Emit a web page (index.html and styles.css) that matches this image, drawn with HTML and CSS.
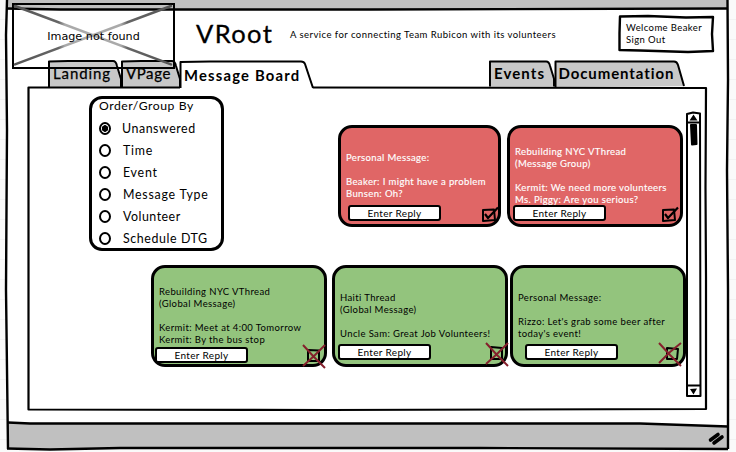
FILE: index.html
```html
<!DOCTYPE html>
<html lang="en">
<head>
<meta charset="utf-8">
<title>VRoot</title>
<link rel="stylesheet" href="styles.css">
</head>
<body>
<div class="window">
  <svg class="frame" viewBox="0 0 736 452" aria-hidden="true">
    <path class="paper" d="M7 0H728V448H7Z"/>
    <path class="chrome" d="M6 0H728V9H6Z"/>
    <path class="chrome" d="M7 423L640 423L728 427V448L7 449Z"/>
    <path class="ink" d="M7 0L6 35L7 130L6 290L8 449"/>
    <path class="ink" d="M6 8.500L60 9.500L370 9.500L728 8.500"/>
    <path class="ink" d="M727.500 0L728 80L727 170L728 290L728 449"/>
    <path class="ink" d="M8 422.500L30 423.500L300 423.500L640 423.500L728 426.500"/>
    <path class="ink" d="M7 448.500L50 449.500L120 448L480 448L728 449"/>
    <path class="ink grip" d="M710.500 440L718 434.500M714 443L722 437"/>
  </svg>

  <header class="header">
    <div class="logo">
      <svg class="logo-cross" viewBox="0 0 162 65" aria-hidden="true">
        <defs>
          <linearGradient id="fade" x1="0" x2="1" y1="0" y2="0">
            <stop offset="0" stop-color="#555"/><stop offset=".28" stop-color="#666"/>
            <stop offset=".32" stop-color="#aaa"/><stop offset=".68" stop-color="#aaa"/>
            <stop offset=".72" stop-color="#666"/><stop offset="1" stop-color="#555"/>
          </linearGradient>
        </defs>
        <path d="M3 3L158 61M3 61L158 3" stroke="url(#fade)" stroke-width="2.6" stroke-linecap="round"/>
      </svg>
      <span>Image not found</span>
    </div>
    <h1 class="title">VRoot</h1>
    <p class="tagline">A service for connecting Team Rubicon with its volunteers</p>
    <div class="account">
      <svg class="outline" viewBox="0 0 96 38" aria-hidden="true"><path d="M2 1.500L30 1L68 2.500L95 2L94 19L95 36L70 37L22 35.500L1.500 35L1.500 18Z"/></svg>
      <span>Welcome Beaker</span><span>Sign Out</span>
    </div>
  </header>

  <nav class="tabs">
    <a class="tab landing"><svg viewBox="0 0 73 27" aria-hidden="true"><path d="M1 26V.500L20 0H65Q68 0 69 5L73 18V26"/></svg><span>Landing</span></a>
    <a class="tab vpage"><svg viewBox="0 0 59 27" aria-hidden="true"><path d="M1 26V.500L20 0H51Q54 0 55 5L59 18V26"/></svg><span>VPage</span></a>
    <a class="tab board"><svg viewBox="0 0 134 27" aria-hidden="true"><path d="M.500 27V1L30 .500H121Q124 .500 125 3L133 27"/></svg><span>Message Board</span></a>
    <a class="tab events"><svg viewBox="0 0 67 27" aria-hidden="true"><path d="M1 26V.500L20 .500H58Q61 .500 62 5L66 18V26"/></svg><span>Events</span></a>
    <a class="tab docs"><svg viewBox="0 0 131 27" aria-hidden="true"><path d="M.500 26V.500L30 .500H119Q122 .500 123 4L129 25"/></svg><span>Documentation</span></a>
  </nav>

  <main class="panel">
    <svg class="panel-line" viewBox="0 0 680 324" aria-hidden="true">
      <path d="M152 .500L.500 .500L.500 322.500L300 323L678 322L678 190L677.500 100L678 1L285 .500"/>
    </svg>
    <div class="content">
      <div class="row top">
        <form class="filter">
          <h2>Order/Group By</h2>
          <label><i class="radio on"></i><span class="f1">Unanswered</span></label>
          <label><i class="radio"></i><span class="f2">Time</span></label>
          <label><i class="radio"></i><span class="f3">Event</span></label>
          <label><i class="radio"></i><span class="f4">Message Type</span></label>
          <label><i class="radio"></i><span class="f5">Volunteer</span></label>
          <label><i class="radio"></i><span class="f6">Schedule DTG</span></label>
        </form>
        <article class="card red personal">
          <p>Personal Message:<br><br>Beaker: I might have a problem<br>Bunsen: Oh?</p>
          <div class="actions"><button>Enter Reply</button>
            <svg class="mark" viewBox="0 0 24 24" aria-hidden="true"><path class="box" d="M5 8L16 7.500L17 18L5 19Z"/><path class="check" d="M7 12L10 16L20 5.500"/></svg></div>
        </article>
        <article class="card red">
          <p>Rebuilding NYC VThread<br>(Message Group)<br><br>Kermit: We need more volunteers<br>Ms. Piggy: Are you serious?</p>
          <div class="actions"><button>Enter Reply</button>
            <svg class="mark group-mark" viewBox="0 0 24 24" aria-hidden="true"><path class="box" d="M5 8L16 7.500L17 18L5 19Z"/><path class="check" d="M7 12L10 16L20 5.500"/></svg></div>
        </article>
      </div>
      <div class="row bottom">
        <article class="card green bus">
          <p>Rebuilding NYC VThread<br>(Global Message)<br><br>Kermit: Meet at 4:00 Tomorrow<br>Kermit: By the bus stop</p>
          <div class="actions"><button>Enter Reply</button>
            <svg class="mark" viewBox="0 0 24 24" aria-hidden="true"><path class="box" d="M5 6L16 6.500L16 17L5 17Z"/><path class="cross" d="M0 1L11 13L22 24M22 1L11 12L0 22"/></svg></div>
        </article>
        <article class="card green haiti">
          <p>Haiti Thread<br>(Global Message)<br><br>Uncle Sam: Great Job Volunteers!</p>
          <div class="actions"><button>Enter Reply</button>
            <svg class="mark" viewBox="0 0 24 24" aria-hidden="true"><path class="box" d="M7 6L18 7L18 18L7 18Z"/><path class="cross" d="M2 2L13 14L24 25M24 2L13 13L2 23"/></svg></div>
        </article>
        <article class="card green beer">
          <p>Personal Message:<br><br>Rizzo: Let's grab some beer after<br>today's event!</p>
          <div class="actions"><button>Enter Reply</button>
            <svg class="mark" viewBox="0 0 24 24" aria-hidden="true"><path class="box" d="M5 7L16 8L15 18L5 18Z"/><path class="cross" d="M-3 2L8 14L19 25M19 2L8 11L-3 22"/></svg></div>
        </article>
      </div>
    </div>
    <svg class="scrollbar" viewBox="0 0 17 286" aria-hidden="true">
      <path class="rail" d="M2 2L8 .500L15 1.500L15.500 284H2Z"/>
      <path class="rail" d="M2 10.500H15M2 273.500H15"/>
      <path d="M4.500 8.500L8.500 2.500L12.500 8.500ZM5 277L12 276.500L8.500 282.500Z"/>
      <path class="thumb" d="M6 13H11L11.500 32L7 32.500Z"/>
    </svg>
  </main>
</div>
</body>
</html>
```

FILE: styles.css
```css
* { box-sizing: border-box; }
body {
  margin: 0;
  width: 736px;
  height: 452px;
  overflow: hidden;
  background: repeating-linear-gradient(#fafafa 0 19px, #f2f2f2 19px 20px);
  font-family: Lato, "Liberation Sans", sans-serif;
  color: #000;
}
svg { display: block; overflow: visible; fill: none; stroke-linejoin: round; }
h1, h2, p { margin: 0; font-weight: 400; }

.window { position: relative; width: 736px; height: 452px; }
.frame { position: absolute; inset: 0; }
.paper { fill: #fff; }
.chrome { fill: #c0c0c0; }
.ink { stroke: #000; stroke-width: 2.4; }
.grip { stroke-width: 3.6; stroke-linecap: round; }

.header { position: relative; display: flex; height: 61px; padding-left: 12px; }
.logo {
  position: relative;
  z-index: 2;
  display: grid;
  place-items: center;
  width: 163px;
  height: 66px;
  margin-top: 3px;
  flex: none;
  border: 2px solid #000;
  font: 11.2px/14px "DejaVu Sans", sans-serif;
}
.logo-cross { position: absolute; inset: -2px; }
.logo span { position: relative; top: 1px; white-space: nowrap; }
.title { width: 94px; margin: 16px 0 0 21px; font-size: 25.5px; line-height: 34px; letter-spacing: 1.4px; -webkit-text-stroke: .3px; }
.tagline { width: 270px; margin-top: 28px; font-size: 9.5px; line-height: 13px; letter-spacing: .46px; white-space: nowrap; }
.account {
  position: relative;
  display: flex;
  flex-direction: column;
  width: 96px;
  height: 38px;
  margin: 15px 0 0 58px;
  padding: 7px 0 0 8px;
  font-size: 9.5px;
  line-height: 12px;
  letter-spacing: .4px;
  white-space: nowrap;
}
.outline { position: absolute; inset: 0; stroke: #000; stroke-width: 2.4; }
.account span { position: relative; }

.tabs { position: relative; display: flex; height: 26px; padding-left: 48px; }
.tab { position: relative; flex: none; height: 27px; font-size: 15px; line-height: 25px; letter-spacing: .9px; white-space: nowrap; -webkit-text-stroke: .25px; }
.tab svg { position: absolute; inset: 0; fill: #c8c8c8; stroke: #000; stroke-width: 2; }
.tab span { position: relative; margin-left: 5px; }
.landing { width: 73px; }
.vpage { width: 59px; letter-spacing: .6px; }
.board { width: 309px; font-weight: 700; font-size: 14.8px; line-height: 29px; letter-spacing: 1.2px; -webkit-text-stroke: 0; }
.board svg { width: 134px; fill: #fff; }
.board span { margin-left: 4px; }
.events { width: 66px; font-weight: 700; letter-spacing: 1.1px; -webkit-text-stroke: 0; }
.docs { width: 131px; font-weight: 700; font-size: 15px; -webkit-text-stroke: 0; }
.docs span { margin-left: 3.5px; }

.panel { position: relative; display: flex; width: 680px; height: 324px; margin-left: 28px; }
.panel-line { position: absolute; inset: 0; stroke: #000; stroke-width: 2.2; }
.content { position: relative; width: 657px; padding-top: 9px; flex: none; }
.row { display: flex; }
.top { height: 169px; padding-left: 61px; }
.bottom { padding-left: 123px; }

.filter { width: 135px; height: 155px; margin-right: 114px; padding: 0 7px; flex: none; border: 3px solid #000; border-radius: 13px; background: #fff; }
.filter h2 { font-size: 12.2px; line-height: 13px; height: 18px; letter-spacing: .55px; white-space: nowrap; }
.filter label { display: flex; align-items: center; height: 22px; font-size: 12.4px; letter-spacing: .75px; white-space: nowrap; }
.filter span { margin-left: 12px; }
.filter .f1 { margin-left: 11px; letter-spacing: .55px; }
.filter .f5 { letter-spacing: .5px; }
.filter .f6 { letter-spacing: .6px; }
.radio { width: 12px; height: 13px; flex: none; border: 2px solid #000; border-radius: 50%; background: #fff; }
.radio.on { background: radial-gradient(circle, #000 0 3px, #fff 3.5px); }

.card { position: relative; display: flex; align-items: center; flex: none; width: 176px; height: 102px; border: 3px solid #000; border-radius: 14px; font-size: 9.5px; line-height: 12px; letter-spacing: .38px; }
.card p { padding-left: 5px; white-space: nowrap; }
.top .card { margin-top: 29px; }
.red { background: #e06666; color: #fff; font-weight: 700; }
.red p { -webkit-text-stroke: .15px #fff; }
.green { background: #93c47d; }
.personal { width: 163px; margin-right: 6px; }
.bus { margin-right: 5px; }
.haiti { margin-right: 2px; }

.actions { position: absolute; inset: auto -3px -3px 6px; display: flex; justify-content: space-between; height: 22px; margin-left: -3px; }
.actions button { width: 93px; height: 16px; padding: 0; border: 2px solid #000; border-radius: 3px; background: #fff; color: #000; font: 10px/12px Lato, sans-serif; letter-spacing: .35px; }
.mark { width: 24px; height: 24px; margin-top: -3px; stroke: #000; stroke-width: 2; }
.mark .check { stroke-width: 2.2; }
.mark .cross { stroke: #85202c; stroke-width: 2; }
.personal .mark { margin-right: -1px; }
.group-mark { margin-right: 1px; }
.personal .actions { margin-left: 1px; }
.bus .actions { margin-left: -5px; height: 20px; }
.haiti .actions, .beer .actions { height: 23px; }
.beer .actions { margin-left: 6px; }

.scrollbar { position: relative; width: 17px; height: 286px; margin-top: 25px; }
.scrollbar path { fill: #000; }
.scrollbar .rail { fill: #fff; stroke: #000; stroke-width: 2; }
.scrollbar .thumb { stroke: #000; stroke-width: 2; }
```
